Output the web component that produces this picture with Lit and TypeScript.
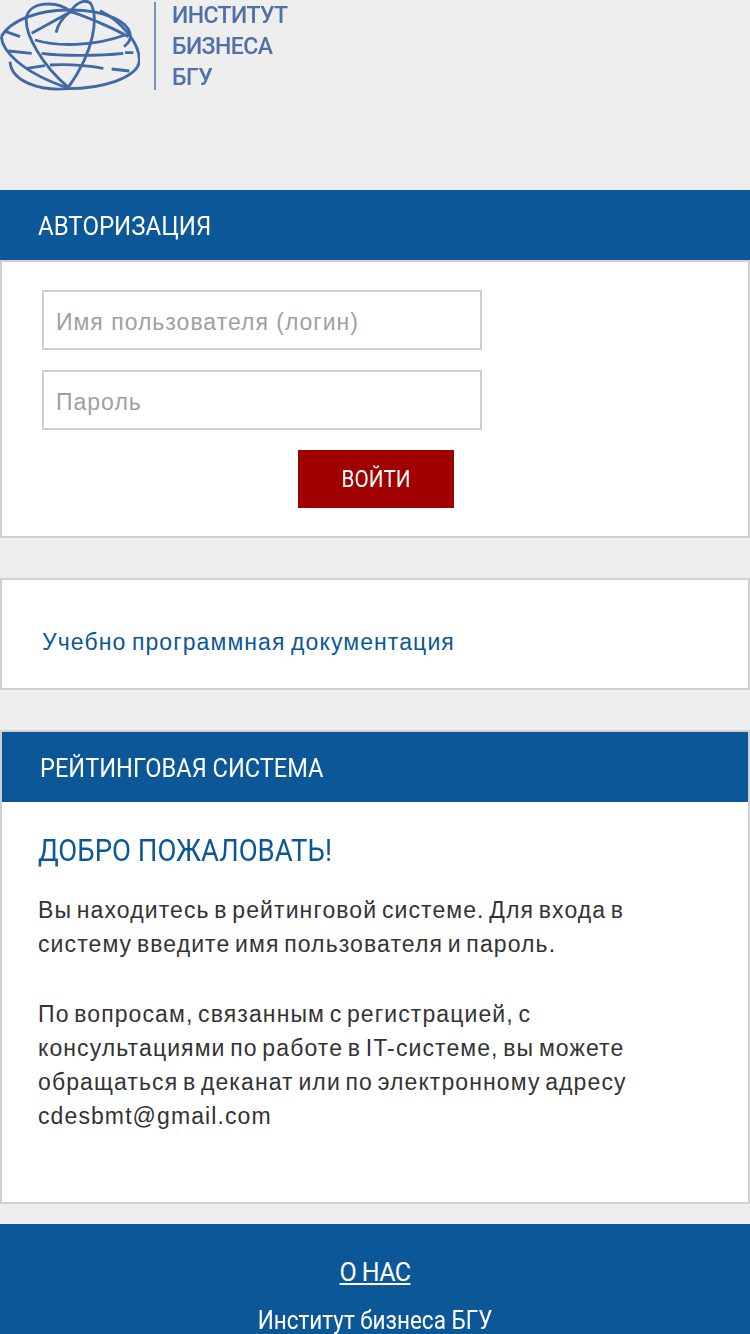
import { LitElement, html, css } from 'lit'
import { customElement } from 'lit/decorators.js'

const BLUE = css`#0b5798`

@customElement('app-root')
export class AppRoot extends LitElement {
  static styles = css`
    :host {
      display: block;
      height: 1334px;
      overflow: hidden;
      background: #eeeeee;
      font-family: 'Liberation Sans', Arial, sans-serif;
    }

    .logo {
      height: 190px;
      display: flex;
      align-items: flex-start;
    }

    .logo svg {
      display: block;
      flex: none;
      filter: blur(0.6px);
    }

    .logo-bar {
      width: 2px;
      height: 88px;
      margin: 2px 16px 0 14px;
      background: #7693bd;
      flex: none;
    }

    .logo-text {
      font-family: Roboto, sans-serif;
      font-weight: 500;
      font-size: 24px;
      line-height: 31px;
      letter-spacing: -0.6px;
      color: #4f71a8;
      transform: scaleX(0.96);
      transform-origin: left;
      filter: blur(0.4px);
    }

    .bar {
      background: ${BLUE};
      color: #fff;
      height: 70px;
      padding: 2px 0 0 38px;
      display: flex;
      align-items: center;
      font-family: Roboto, sans-serif;
      font-size: 26px;
      box-sizing: border-box;
    }

    .bar span {
      transform: scaleX(0.925);
      transform-origin: left;
    }

    .rating .bar span {
      transform: scaleX(0.908);
    }

    .card {
      background: #fff;
      border: 2px solid #d0d0d0;
      box-sizing: border-box;
    }

    .login {
      height: 278px;
      padding: 28px 0 0 40px;
    }

    .field {
      display: block;
      width: 440px;
      height: 60px;
      box-sizing: border-box;
      border: 2px solid #d0d0d0;
      margin: 0 0 20px;
      padding: 4px 12px 0;
      font: 23px 'Liberation Sans', Arial, sans-serif;
      letter-spacing: 1px;
      background: #fff;
      outline: none;
    }

    .field::placeholder {
      color: #a0a0a0;
      opacity: 1;
    }

    .submit {
      display: block;
      width: 156px;
      height: 58px;
      margin-left: 256px;
      padding: 0;
      border: none;
      background: #a00000;
      color: #fff;
      font-family: Roboto, sans-serif;
      font-size: 24px;
    }

    .submit span {
      display: inline-block;
      transform: scaleX(0.86);
    }

    .docs {
      margin-top: 40px;
      height: 112px;
      padding: 47px 0 0 40px;
      font-size: 23px;
      line-height: 30px;
      letter-spacing: 1.1px;
      word-spacing: -2px;
    }

    .docs a {
      color: ${BLUE};
      text-decoration: none;
    }

    .rating {
      margin-top: 40px;
      height: 474px;
    }

    .rating-body {
      padding: 28px 36px 0;
    }

    h2 {
      margin: 0 0 23px;
      font-family: Roboto, sans-serif;
      font-weight: 400;
      font-size: 32px;
      line-height: 40px;
      color: ${BLUE};
      transform: scaleX(0.86);
      transform-origin: left;
    }

    p {
      margin: 0 0 36px;
      font-size: 23px;
      line-height: 34px;
      letter-spacing: 1.1px;
      word-spacing: -2.8px;
      color: #333;
    }

    footer {
      margin-top: 20px;
      background: ${BLUE};
      color: #fff;
      text-align: center;
      font-family: Roboto, sans-serif;
      padding-top: 31px;
      font-size: 25px;
    }

    footer a {
      display: block;
      color: #fff;
      text-decoration: underline;
      line-height: 36px;
      margin-bottom: 12px;
      letter-spacing: -0.6px;
    }

    footer div {
      line-height: 36px;
      transform: scaleX(0.9);
    }
  `

  render() {
    return html`
      <div class="logo">
        <svg width="140" height="92" viewBox="0 0 420 276" fill="none" stroke="#4069a6" stroke-width="8.5">
          <path d="M4 110C30 60 120 28 210 30C300 28 380 60 390 100C395 118 385 130 372 140" />
          <path d="M4 110C6 150 60 215 204 264" />
          <path d="M300 32C360 60 420 130 418 182C415 235 300 266 205 266C120 274 34 245 30 185" />
          <path d="M205 262C130 200 70 100 80 50C90 5 170 0 212 35C225 10 255-5 272 10C295 50 285 150 205 262Z" />
          <path d="M168 98C175 70 190 50 212 35C260 50 340 85 385 110M95 100L212 35" />
          <path d="M105 120C170 140 280 140 375 105" />
          <path d="M18 95L60 110M25 153L95 160M125 160C180 168 300 168 370 160M375 158L400 158" />
          <path d="M80 205L135 197M150 195C200 192 270 198 310 205M335 207L388 213" />
        </svg>
        <div class="logo-bar"></div>
        <div class="logo-text">ИНСТИТУТ<br />БИЗНЕСА<br />БГУ</div>
      </div>

      <div class="bar"><span>АВТОРИЗАЦИЯ</span></div>
      <form class="card login">
        <input class="field" placeholder="Имя пользователя (логин)" />
        <input class="field" type="password" placeholder="Пароль" />
        <button class="submit" type="button"><span>ВОЙТИ</span></button>
      </form>

      <div class="card docs">
        <a href="#">Учебно программная документация</a>
      </div>

      <div class="card rating">
        <div class="bar"><span>РЕЙТИНГОВАЯ СИСТЕМА</span></div>
        <div class="rating-body">
          <h2>ДОБРО ПОЖАЛОВАТЬ!</h2>
          <p>Вы находитесь в рейтинговой системе. Для входа в систему введите имя пользователя и пароль.</p>
          <p>По вопросам, связанным с регистрацией, с консультациями по работе в IT-системе, вы можете обращаться в деканат или по электронному адресу cdesbmt@gmail.com</p>
        </div>
      </div>

      <footer>
        <a href="#">О НАС</a>
        <div>Институт бизнеса БГУ</div>
      </footer>
    `
  }
}
